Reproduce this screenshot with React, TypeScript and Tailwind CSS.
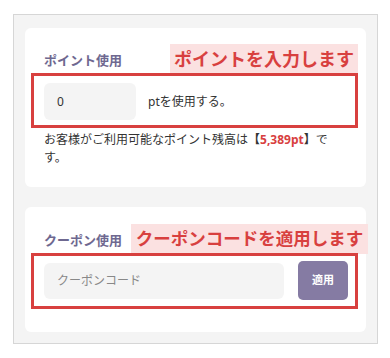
export default function App() {
    const font = { fontFamily: '"Noto Sans", "Noto Sans CJK JP", sans-serif' };

    return (
        <div className="relative w-[390px] h-[358px] bg-white" style={font}>
            {/* 外枠 */}
            <div className="absolute left-[13px] top-[14px] w-[365px] h-[330px] border border-[#d6d6d6] bg-[#f4f4f4] px-[11px] pt-[13px] flex flex-col gap-[20px]">
                {/* ポイント使用 */}
                <div className="bg-white rounded-[6px] h-[159px] pl-[19px] pr-[18px] pt-[22px]">
                    <p className="text-[13px] leading-[20px] font-semibold text-[#6e6890]">ポイント使用</p>
                    <div className="mt-[13px] flex items-center">
                        <input
                            type="text"
                            defaultValue="0"
                            className="w-[92px] h-[37px] rounded-[6px] bg-[#f4f4f4] pl-[13px] text-[12px] text-[#333] outline-none"
                        />
                        <span className="ml-[12px] text-[12px] text-[#333]">ptを使用する。</span>
                    </div>
                    <p className="mt-[11px] text-[12px] leading-[18px] text-[#333]">
                        お客様がご利用可能なポイント残高は<b>【</b><b className="text-[#d8403f]">5,389pt</b><b>】</b>です。
                    </p>
                </div>

                {/* クーポン使用 */}
                <div className="bg-white rounded-[6px] h-[125px] pl-[19px] pr-[18px] pt-[23px]">
                    <p className="text-[13px] leading-[20px] font-semibold text-[#6e6890]">クーポン使用</p>
                    <div className="mt-[11px] flex items-center justify-between">
                        <input
                            type="text"
                            placeholder="クーポンコード"
                            className="w-[240px] h-[36px] rounded-[6px] bg-[#f4f4f4] pl-[13px] text-[12px] text-[#333] placeholder:text-[#888] outline-none"
                        />
                        <button className="w-[50px] h-[39px] rounded-[5px] bg-[#857ba3] text-white text-[11px] font-bold">
                            適用
                        </button>
                    </div>
                </div>
            </div>

            {/* 注釈 */}
            <div className="absolute left-[170px] top-[44px] w-[188px] h-[30px] bg-[#fbe1e1] flex items-center justify-center">
                <span className="text-[18px] font-bold text-[#d8403f] leading-none">ポイントを入力します</span>
            </div>
            <div className="absolute left-[31px] top-[73px] w-[327px] h-[55px] border-[3px] border-[#d8403f]" />

            <div className="absolute left-[131px] top-[224px] w-[237px] h-[30px] bg-[#fbe1e1] flex items-center justify-center">
                <span className="text-[17.5px] font-bold text-[#d8403f] leading-none whitespace-nowrap">クーポンコードを適用します</span>
            </div>
            <div className="absolute left-[31px] top-[253px] w-[327px] h-[56px] border-[3px] border-[#d8403f]" />
        </div>
    );
}
